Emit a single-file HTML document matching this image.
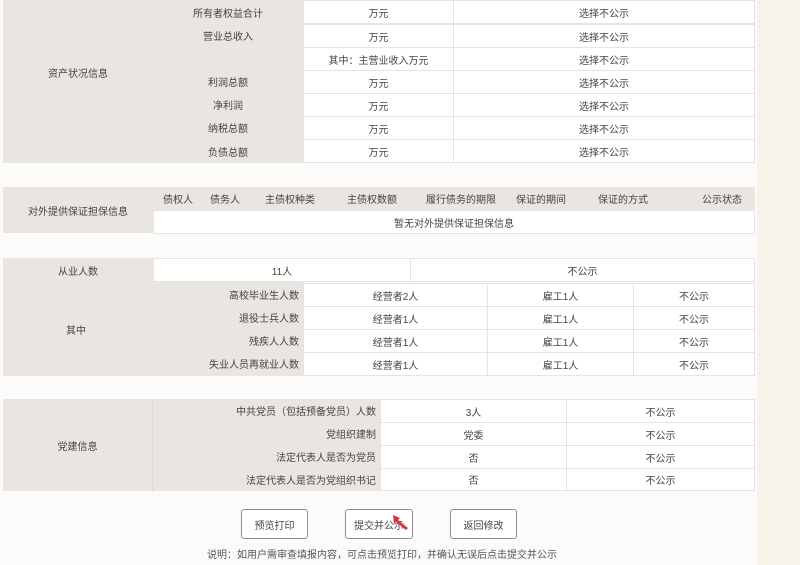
<!DOCTYPE html>
<html><head><meta charset="utf-8"><style>
*{margin:0;padding:0;box-sizing:border-box}
body{width:800px;height:565px;overflow:hidden;background:#fdfbfa;position:relative;font-family:"Liberation Sans","Noto Sans CJK SC",sans-serif;font-size:10px;color:#444}
.c{position:absolute;display:flex;align-items:center;justify-content:center;white-space:nowrap}
.g{background:#e9e5e0}
.w{background:#fff;border:1px solid #e6e3e0}
.r{justify-content:flex-end;padding-right:4px}
.btn{position:absolute;top:509px;width:67px;height:30px;border:1px solid #8e8e8e;border-radius:3px;background:#fff;display:flex;align-items:center;justify-content:center;font-size:10px;color:#444}
</style></head><body>
<div style="position:absolute;left:757px;top:0;width:43px;height:565px;background:#f7f2ea"></div>

<!-- section1 -->
<div class="c g" style="left:3px;top:0;width:300px;height:163px"></div>
<div class="c" style="left:3px;top:0;width:150px;height:145px">资产状况信息</div>
<div class="c" style="left:153px;top:0;width:150px;height:24px">所有者权益合计</div>
<div class="c" style="left:153px;top:24px;width:150px;height:23px">营业总收入</div>
<div class="c" style="left:153px;top:70px;width:150px;height:23px">利润总额</div>
<div class="c" style="left:153px;top:93px;width:150px;height:23px">净利润</div>
<div class="c" style="left:153px;top:116px;width:150px;height:23px">纳税总额</div>
<div class="c" style="left:153px;top:139px;width:150px;height:24px">负债总额</div>
<div class="c w" style="left:303px;top:0;width:151px;height:24px">万元</div>
<div class="c w" style="left:453px;top:0;width:302px;height:24px">选择不公示</div>
<div class="c w" style="left:303px;top:24px;width:151px;height:24px">万元</div>
<div class="c w" style="left:453px;top:24px;width:302px;height:24px">选择不公示</div>
<div class="c w" style="left:303px;top:47px;width:151px;height:24px">其中：主营业收入万元</div>
<div class="c w" style="left:453px;top:47px;width:302px;height:24px">选择不公示</div>
<div class="c w" style="left:303px;top:70px;width:151px;height:24px">万元</div>
<div class="c w" style="left:453px;top:70px;width:302px;height:24px">选择不公示</div>
<div class="c w" style="left:303px;top:93px;width:151px;height:24px">万元</div>
<div class="c w" style="left:453px;top:93px;width:302px;height:24px">选择不公示</div>
<div class="c w" style="left:303px;top:116px;width:151px;height:24px">万元</div>
<div class="c w" style="left:453px;top:116px;width:302px;height:24px">选择不公示</div>
<div class="c w" style="left:303px;top:139px;width:151px;height:24px">万元</div>
<div class="c w" style="left:453px;top:139px;width:302px;height:24px">选择不公示</div>

<!-- section2 -->
<div class="c g" style="left:3px;top:187px;width:752px;height:23px"></div>
<div class="c g" style="left:3px;top:187px;width:150px;height:46px">对外提供保证担保信息</div>
<div class="c" style="left:158px;top:187px;width:40px;height:23px">债权人</div>
<div class="c" style="left:205px;top:187px;width:40px;height:23px">债务人</div>
<div class="c" style="left:260px;top:187px;width:60px;height:23px">主债权种类</div>
<div class="c" style="left:342px;top:187px;width:60px;height:23px">主债权数额</div>
<div class="c" style="left:421px;top:187px;width:80px;height:23px">履行债务的期限</div>
<div class="c" style="left:511px;top:187px;width:60px;height:23px">保证的期间</div>
<div class="c" style="left:593px;top:187px;width:60px;height:23px">保证的方式</div>
<div class="c" style="left:697px;top:187px;width:50px;height:23px">公示状态</div>
<div class="c w" style="left:153px;top:210px;width:602px;height:24px">暂无对外提供保证担保信息</div>

<!-- section3 -->
<div class="c g" style="left:3px;top:258px;width:150px;height:24px">从业人数</div>
<div class="c w" style="left:153px;top:258px;width:258px;height:24px">11人</div>
<div class="c w" style="left:410px;top:258px;width:345px;height:24px">不公示</div>
<div class="c g" style="left:3px;top:282px;width:300px;height:94px"></div>
<div class="c" style="left:3px;top:282px;width:146px;height:94px">其中</div>
<div class="c r" style="left:153px;top:283px;width:150px;height:23px">高校毕业生人数</div>
<div class="c r" style="left:153px;top:306px;width:150px;height:23px">退役士兵人数</div>
<div class="c r" style="left:153px;top:329px;width:150px;height:23px">残疾人人数</div>
<div class="c r" style="left:153px;top:352px;width:150px;height:23px">失业人员再就业人数</div>
<div class="c w" style="left:303px;top:283px;width:185px;height:24px">经营者2人</div>
<div class="c w" style="left:487px;top:283px;width:147px;height:24px">雇工1人</div>
<div class="c w" style="left:633px;top:283px;width:122px;height:24px">不公示</div>
<div class="c w" style="left:303px;top:306px;width:185px;height:24px">经营者1人</div>
<div class="c w" style="left:487px;top:306px;width:147px;height:24px">雇工1人</div>
<div class="c w" style="left:633px;top:306px;width:122px;height:24px">不公示</div>
<div class="c w" style="left:303px;top:329px;width:185px;height:24px">经营者1人</div>
<div class="c w" style="left:487px;top:329px;width:147px;height:24px">雇工1人</div>
<div class="c w" style="left:633px;top:329px;width:122px;height:24px">不公示</div>
<div class="c w" style="left:303px;top:352px;width:185px;height:24px">经营者1人</div>
<div class="c w" style="left:487px;top:352px;width:147px;height:24px">雇工1人</div>
<div class="c w" style="left:633px;top:352px;width:122px;height:24px">不公示</div>

<!-- section4 -->
<div class="c g" style="left:3px;top:399px;width:377px;height:92px"></div>
<div class="c" style="left:3px;top:399px;width:150px;height:92px;border-right:1px solid #ddd8d2">党建信息</div>
<div class="c r" style="left:153px;top:399px;width:227px;height:23px">中共党员（包括预备党员）人数</div>
<div class="c r" style="left:153px;top:422px;width:227px;height:23px">党组织建制</div>
<div class="c r" style="left:153px;top:445px;width:227px;height:23px">法定代表人是否为党员</div>
<div class="c r" style="left:153px;top:468px;width:227px;height:23px">法定代表人是否为党组织书记</div>
<div class="c w" style="left:380px;top:399px;width:187px;height:24px">3人</div>
<div class="c w" style="left:566px;top:399px;width:189px;height:24px">不公示</div>
<div class="c w" style="left:380px;top:422px;width:187px;height:24px">党委</div>
<div class="c w" style="left:566px;top:422px;width:189px;height:24px">不公示</div>
<div class="c w" style="left:380px;top:445px;width:187px;height:24px">否</div>
<div class="c w" style="left:566px;top:445px;width:189px;height:24px">不公示</div>
<div class="c w" style="left:380px;top:468px;width:187px;height:23px">否</div>
<div class="c w" style="left:566px;top:468px;width:189px;height:23px">不公示</div>

<div class="btn" style="left:241px">预览打印</div>
<div class="btn" style="left:345px;width:68px">提交并公示</div>
<div class="btn" style="left:450px">返回修改</div>
<svg style="position:absolute;left:390px;top:512px" width="30" height="22"><path d="M3 3 L10 6 L8 8 L18 16 L16 18 L6 10 L4 12 Z" fill="#d2373d"/></svg>
<div class="c" style="left:207px;top:546px;height:15px;font-size:10px;color:#555">说明：如用户需审查填报内容，可点击预览打印，并确认无误后点击提交并公示</div>
</body></html>
